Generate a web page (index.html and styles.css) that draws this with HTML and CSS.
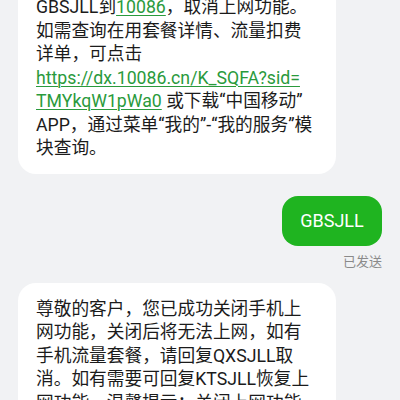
FILE: index.html
```html
<!DOCTYPE html>
<html lang="zh-CN">
<head>
<meta charset="utf-8">
<link rel="stylesheet" href="styles.css">
</head>
<body>
<div class="chat">
  <div class="bubble in first">
    GBSJLL到<span class="link">10086</span>，取消上网功能。<br>
    如需查询在用套餐详情、流量扣费<br>
    详单，可点击<br>
    <span class="link">https://dx.10086.cn/K_SQFA?sid=</span><br>
    <span class="link">TMYkqW1pWa0</span> 或下载“中国移动”<br>
    APP，通过菜单“我的”-“我的服务”模<br>
    块查询。
  </div>
  <div class="out-row">
    <div class="bubble out">GBSJLL</div>
    <div class="status">已发送</div>
  </div>
  <div class="bubble in second">
    尊敬的客户，您已成功关闭手机上<br>
    网功能，关闭后将无法上网，如有<br>
    手机流量套餐，请回复QXSJLL取<br>
    消。如有需要可回复KTSJLL恢复上<br>
    网功能，温馨提示：关闭上网功能<br>
    后仍可使用短信和通话。
  </div>
</div>
</body>
</html>
```

FILE: styles.css
```css
html, body {
  margin: 0;
  padding: 0;
  background: #f1f2f4;
  overflow: hidden;
}
.chat {
  width: 400px;
  height: 400px;
  overflow: hidden;
  display: flex;
  flex-direction: column;
  padding: 0 18px;
  box-sizing: border-box;
  font-family: Roboto, "Noto Sans CJK SC", sans-serif;
}
.bubble {
  font-size: 17.7px;
  line-height: 23.5px;
  color: #1b1b1b;
}
.in {
  background: #ffffff;
  border-radius: 18px;
  padding: 15px 0 13px 18px;
  width: 318px;
  box-sizing: border-box;
  white-space: nowrap;
}
.first {
  margin-top: -19px;
}
.link {
  color: #2a9a3c;
  text-decoration: underline;
  text-underline-offset: 2px;
  text-decoration-thickness: 1px;
}
.out-row {
  display: flex;
  flex-direction: column;
  align-items: flex-end;
  margin-top: 22px;
}
.out {
  background: #1fb420;
  color: #ffffff;
  width: 100px;
  height: 50px;
  border-radius: 16px;
  display: flex;
  align-items: center;
  justify-content: center;
  font-size: 18px;
}
.status {
  font-size: 13px;
  line-height: 16px;
  color: #8a8a8a;
  margin-top: 8px;
}
.second {
  margin-top: 13px;
}
```
